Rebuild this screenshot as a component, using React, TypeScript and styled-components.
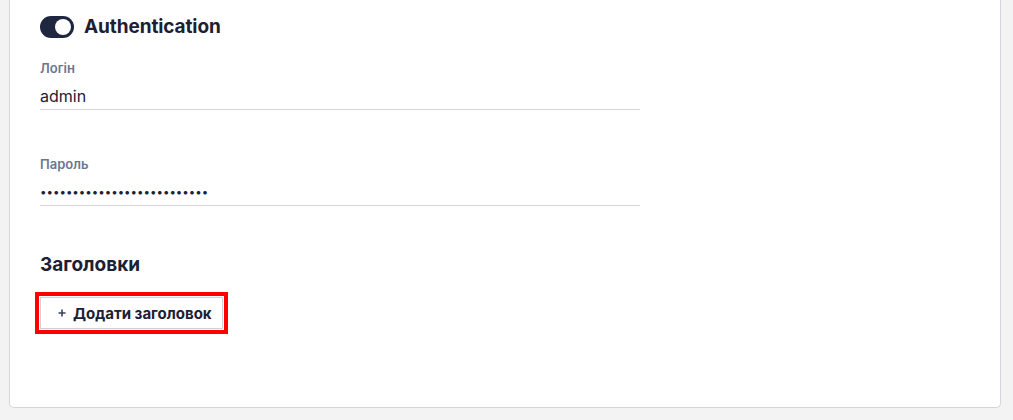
import React from "react";
import styled, { createGlobalStyle } from "styled-components";

const Global = createGlobalStyle`
  html, body { margin: 0; padding: 0; background: #f3f3f4; }
  body { font-family: "Inter", "Noto Sans", sans-serif; color: #1c2033; }
  * { box-sizing: border-box; }
`;

const Page = styled.div`
  padding: 0 12px 13px 9px;
`;

const Card = styled.section`
  background: #ffffff;
  border: 1px solid #d4d6de;
  border-top: none;
  border-radius: 0 0 5px 5px;
  padding: 15px 30px 78px 30px;
`;

const Header = styled.div`
  display: flex;
  align-items: center;
  gap: 10px;
  height: 24px;
`;

const Toggle = styled.span<{ $on: boolean }>`
  display: inline-flex;
  align-items: center;
  justify-content: ${(p) => (p.$on ? "flex-end" : "flex-start")};
  width: 34px;
  height: 22px;
  padding: 3px;
  border-radius: 11px;
  background: ${(p) => (p.$on ? "#1f2640" : "#c9ccd6")};
`;

const Knob = styled.span`
  width: 16px;
  height: 16px;
  border-radius: 50%;
  background: #ffffff;
`;

const Title = styled.h2`
  margin: 0;
  font-size: 19px;
  line-height: 24px;
  font-weight: 700;
  color: #1c2033;
  letter-spacing: -0.1px;
`;

const Field = styled.label<{ $gap: number }>`
  display: flex;
  flex-direction: column;
  width: 600px;
  margin-top: ${(p) => p.$gap}px;
`;

const Label = styled.span`
  font-size: 13px;
  line-height: 16px;
  font-weight: 600;
  color: #6c7590;
`;

const Input = styled.input<{ $small?: boolean }>`
  font-family: "Inter", "Noto Sans", sans-serif;
  font-size: ${(p) => (p.$small ? "11.5px" : "16px")};
  line-height: 20px;
  height: 34px;
  padding: 10px 0 3px 0;
  border: none;
  border-bottom: 1px solid #d4d6e0;
  outline: none;
  color: #1c2033;
  background: transparent;
`;

const SectionTitle = styled.h3`
  margin: 47px 0 0 0;
  font-size: 19px;
  line-height: 24px;
  font-weight: 700;
  color: #1c2033;
`;

const AddButton = styled.button`
  display: inline-flex;
  align-items: center;
  gap: 7px;
  margin-top: 20px;
  height: 32px;
  padding: 0 10px 0 17px;
  background: #ffffff;
  border: 1px solid #cfd2da;
  border-radius: 0;
  font-family: "Inter", "Noto Sans", sans-serif;
  font-size: 15px;
  font-weight: 700;
  color: #1c2033;
  outline: 4px solid #ff0000;
  outline-offset: 1px;
  cursor: pointer;
`;

const PlusIcon = () => (
  <svg width="8" height="8" viewBox="0 0 8 8" aria-hidden>
    <path d="M4 0.5v7M0.5 4h7" stroke="#3a4160" strokeWidth="1.6" />
  </svg>
);

export default function App() {
  return (
    <>
      <Global />
      <Page>
        <Card>
          <Header>
            <Toggle $on>
              <Knob />
            </Toggle>
            <Title>Authentication</Title>
          </Header>
          <Field $gap={21}>
            <Label>Логін</Label>
            <Input type="text" value="admin" readOnly />
          </Field>
          <Field $gap={46}>
            <Label>Пароль</Label>
            <Input $small type="password" value="abcdefghijklmnopqrstuvwxyz" readOnly />
          </Field>
          <SectionTitle>Заголовки</SectionTitle>
          <div>
            <AddButton type="button">
              <PlusIcon />
              Додати заголовок
            </AddButton>
          </div>
        </Card>
      </Page>
    </>
  );
}
